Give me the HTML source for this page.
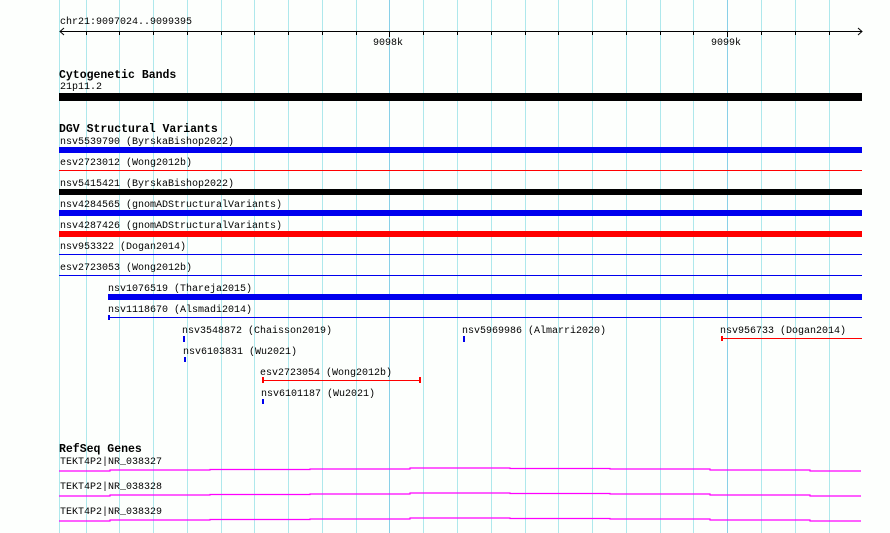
<!DOCTYPE html>
<html><head><meta charset="utf-8"><style>
html,body{margin:0;padding:0;background:#fdfffd;}
svg{display:block}
text{font-family:"Liberation Mono",monospace;font-size:10px;fill:#000}
.b{font-weight:bold;font-size:11.5px}
</style></head><body>
<svg width="890" height="533" xmlns="http://www.w3.org/2000/svg">
<g stroke="#aee8ec" stroke-width="1">
<line x1="59.5" y1="0" x2="59.5" y2="533"/><line x1="86.5" y1="0" x2="86.5" y2="533"/><line x1="119.5" y1="0" x2="119.5" y2="533"/><line x1="153.5" y1="0" x2="153.5" y2="533"/><line x1="187.5" y1="0" x2="187.5" y2="533"/><line x1="221.5" y1="0" x2="221.5" y2="533"/><line x1="254.5" y1="0" x2="254.5" y2="533"/><line x1="288.5" y1="0" x2="288.5" y2="533"/><line x1="322.5" y1="0" x2="322.5" y2="533"/><line x1="356.5" y1="0" x2="356.5" y2="533"/><line x1="389.5" y1="0" x2="389.5" y2="533" stroke="#88d0e8"/><line x1="423.5" y1="0" x2="423.5" y2="533"/><line x1="457.5" y1="0" x2="457.5" y2="533"/><line x1="491.5" y1="0" x2="491.5" y2="533"/><line x1="525.5" y1="0" x2="525.5" y2="533"/><line x1="558.5" y1="0" x2="558.5" y2="533"/><line x1="592.5" y1="0" x2="592.5" y2="533"/><line x1="626.5" y1="0" x2="626.5" y2="533"/><line x1="660.5" y1="0" x2="660.5" y2="533"/><line x1="693.5" y1="0" x2="693.5" y2="533"/><line x1="727.5" y1="0" x2="727.5" y2="533" stroke="#88d0e8"/><line x1="761.5" y1="0" x2="761.5" y2="533"/><line x1="795.5" y1="0" x2="795.5" y2="533"/><line x1="829.5" y1="0" x2="829.5" y2="533"/>
</g>
<!-- ruler -->
<text x="60" y="24">chr21:9097024..9099395</text>
<g stroke="#000" stroke-width="1" fill="none">
<line x1="60" y1="31.5" x2="862" y2="31.5"/>
<polyline points="64,28 60,31.5 64,35"/><polyline points="858,28 862,31.5 858,35"/>
<path d="M86.5 31V35M119.5 31V35M153.5 31V35M187.5 31V35M221.5 31V35M254.5 31V35M288.5 31V35M322.5 31V35M356.5 31V35M389.5 31V37M423.5 31V35M457.5 31V35M491.5 31V35M525.5 31V35M558.5 31V35M592.5 31V35M626.5 31V35M660.5 31V35M693.5 31V35M727.5 31V37M761.5 31V35M795.5 31V35M829.5 31V35"/>
</g>
<text x="373" y="45">9098k</text><text x="711" y="45">9099k</text>
<!-- cyto -->
<text class="b" x="59" y="78">Cytogenetic Bands</text>
<text x="60" y="89">21p11.2</text>
<rect x="59" y="93" width="803" height="8" fill="#000"/>
<!-- DGV -->
<text class="b" x="59" y="132">DGV Structural Variants</text>
<text x="60" y="144">nsv5539790 (ByrskaBishop2022)</text>
<rect x="59" y="147" width="803" height="6" fill="#0000ee"/>
<text x="60" y="165">esv2723012 (Wong2012b)</text>
<rect x="59" y="170" width="803" height="1" fill="#f00"/>
<text x="60" y="186">nsv5415421 (ByrskaBishop2022)</text>
<rect x="59" y="189" width="803" height="6" fill="#000"/>
<text x="60" y="207">nsv4284565 (gnomADStructuralVariants)</text>
<rect x="59" y="210" width="803" height="6" fill="#0000ee"/>
<text x="60" y="228">nsv4287426 (gnomADStructuralVariants)</text>
<rect x="59" y="231" width="803" height="6" fill="#f00"/>
<text x="60" y="249">nsv953322 (Dogan2014)</text>
<rect x="59" y="254" width="803" height="1" fill="#0000ee"/>
<text x="60" y="270">esv2723053 (Wong2012b)</text>
<rect x="59" y="275" width="803" height="1" fill="#0000ee"/>
<text x="108" y="291">nsv1076519 (Thareja2015)</text>
<rect x="108" y="294" width="754" height="6" fill="#0000ee"/>
<text x="108" y="312">nsv1118670 (Alsmadi2014)</text>
<rect x="108" y="317" width="754" height="1" fill="#0000ee"/><rect x="108" y="315" width="2" height="5" fill="#0000ee"/>
<text x="182" y="333">nsv3548872 (Chaisson2019)</text>
<rect x="183" y="336" width="2" height="6" fill="#0000ee"/>
<text x="462" y="333">nsv5969986 (Almarri2020)</text>
<rect x="463" y="336" width="2" height="6" fill="#0000ee"/>
<text x="720" y="333">nsv956733 (Dogan2014)</text>
<rect x="721" y="338" width="141" height="1" fill="#f00"/><rect x="721" y="336" width="2" height="5" fill="#f00"/>
<text x="183" y="354">nsv6103831 (Wu2021)</text>
<rect x="184" y="357" width="2" height="5" fill="#0000ee"/>
<text x="260" y="375">esv2723054 (Wong2012b)</text>
<rect x="262" y="380" width="158" height="1" fill="#f00"/><rect x="262" y="377" width="2" height="6" fill="#f00"/><rect x="419" y="377" width="2" height="6" fill="#f00"/>
<text x="261" y="396">nsv6101187 (Wu2021)</text>
<rect x="262" y="399" width="2" height="5" fill="#0000ee"/>
<!-- RefSeq -->
<text class="b" x="59" y="452">RefSeq Genes</text>
<text x="60" y="464">TEKT4P2|NR_038327</text>
<text x="60" y="489">TEKT4P2|NR_038328</text>
<text x="60" y="514">TEKT4P2|NR_038329</text>
<g stroke="#ff00ff" stroke-width="1.2" fill="none">
<path d="M59 471H110V470H210V469.5H310V469H410V468H510V468.5H610V469H710V470H810V471H861"/>
<path d="M59 496H110V495H210V494.5H310V494H410V493H510V493.5H610V494H710V495H810V496H861"/>
<path d="M59 521H110V520H210V519.5H310V519H410V518H510V518.5H610V519H710V520H810V521H861"/>
</g>
</svg>
</body></html>
